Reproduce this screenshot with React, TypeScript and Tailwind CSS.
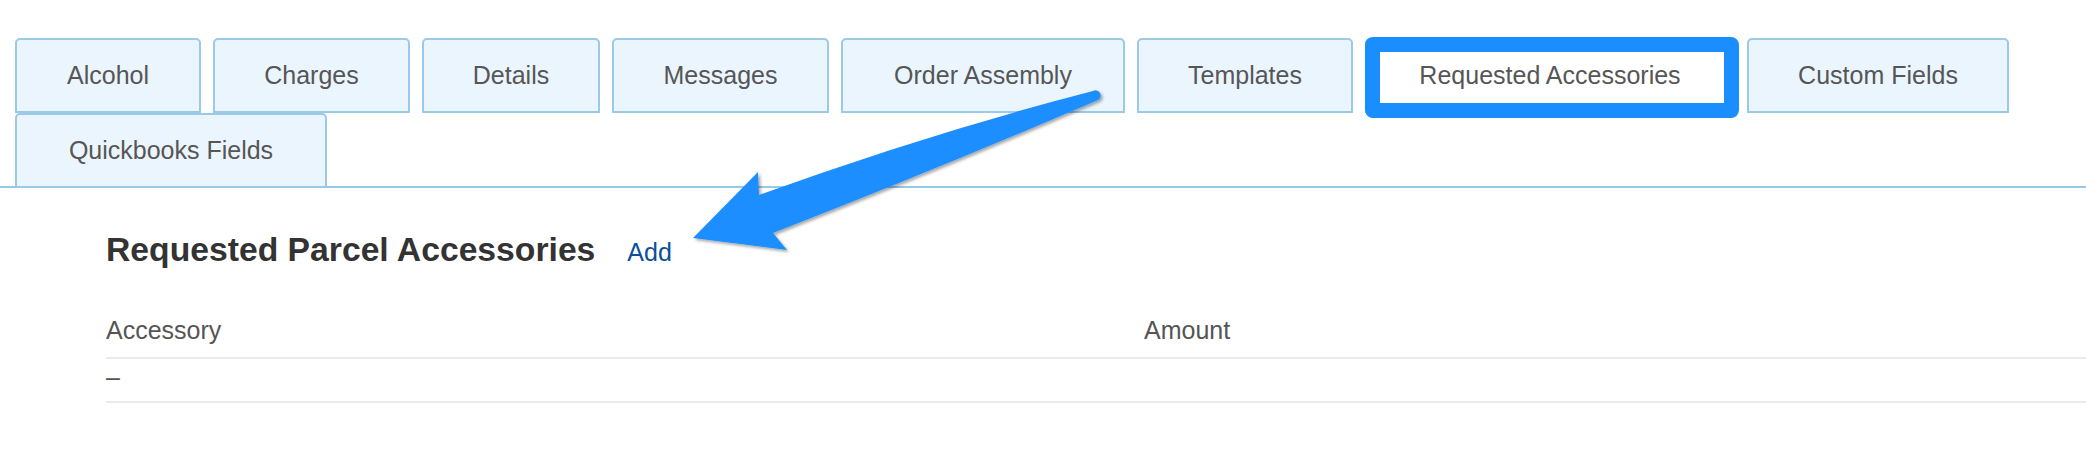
import React from 'react';

interface Tab {
  label: string;
  width: string;
  active?: boolean;
}

const TABS: Tab[] = [
  { label: 'Alcohol', width: 'w-[186px]' },
  { label: 'Charges', width: 'w-[197px]' },
  { label: 'Details', width: 'w-[178px]' },
  { label: 'Messages', width: 'w-[217px]' },
  { label: 'Order Assembly', width: 'w-[284px]' },
  { label: 'Templates', width: 'w-[216px]' },
  { label: 'Requested Accessories', width: 'w-[370px]', active: true },
  { label: 'Custom Fields', width: 'w-[262px]' },
  { label: 'Quickbooks Fields', width: 'w-[312px]' },
];

const TabButton: React.FC<{ tab: Tab }> = ({ tab }) => (
  <div
    className={`relative h-[75px] ${tab.width} flex items-center justify-center rounded-t-[5px] border-2 border-[#9acae8] text-[25px] text-[#565656] ${
      tab.active ? 'bg-white' : 'bg-[#ebf5fe]'
    }`}
  >
    <span>{tab.label}</span>
    {/* screenshot highlight */}
    {tab.active && (
      <div className="absolute -left-[2px] -top-[3px] -right-[6px] -bottom-[7px] rounded-[8px] border-[15px] border-[#1b8eff]" />
    )}
  </div>
);

// hand drawn annotation arrow pointing at the Add link
const Arrow = () => (
  <svg className="absolute left-0 top-0 pointer-events-none" width="2086" height="454" viewBox="0 0 2086 454">
    <defs>
      <filter id="arrow-shadow" x="-10%" y="-10%" width="120%" height="130%">
        <feDropShadow dx="2" dy="2" stdDeviation="1.5" floodColor="#000" floodOpacity="0.35" />
      </filter>
    </defs>
    <path
      d="M1093 91 Q930 133 759 195 L758 172 L693 238 L787 250 L773 233 Q940 168 1098 100 A5 5 0 0 0 1093 91 Z"
      fill="#1b8eff"
      filter="url(#arrow-shadow)"
    />
  </svg>
);

export default function App() {
  return (
    <div className="relative w-[2086px] min-h-[454px] bg-white font-['Liberation_Sans',Arial,sans-serif] overflow-hidden">
      {/* TAB STRIP */}
      <div className="border-b-2 border-[#97c8e6]">
        <div className="flex flex-wrap gap-x-[12px] pl-[15px] pt-[38px] -mb-[2px]">
          {TABS.map((t) => (
            <TabButton key={t.label} tab={t} />
          ))}
        </div>
      </div>

      {/* SECTION */}
      <div className="pl-[106px] pt-[41px]">
        <div className="flex items-baseline gap-[32px]">
          <h2 className="text-[33.7px] leading-[40px] font-bold text-[#333333]">Requested Parcel Accessories</h2>
          <a className="text-[25px] text-[#0b4f9c] cursor-pointer">Add</a>
        </div>

        <div className="mt-[43px] text-[25px] text-[#555555]">
          <div className="grid grid-cols-[1038px_1fr] leading-[30px] pb-[12px] border-b-2 border-[#ebebeb]">
            <div>Accessory</div>
            <div>Amount</div>
          </div>
          <div className="grid grid-cols-[1038px_1fr] h-[44px] items-center pb-[5px] border-b-2 border-[#ebebeb]">
            <div>–</div>
            <div></div>
          </div>
        </div>
      </div>

      <Arrow />
    </div>
  );
}
